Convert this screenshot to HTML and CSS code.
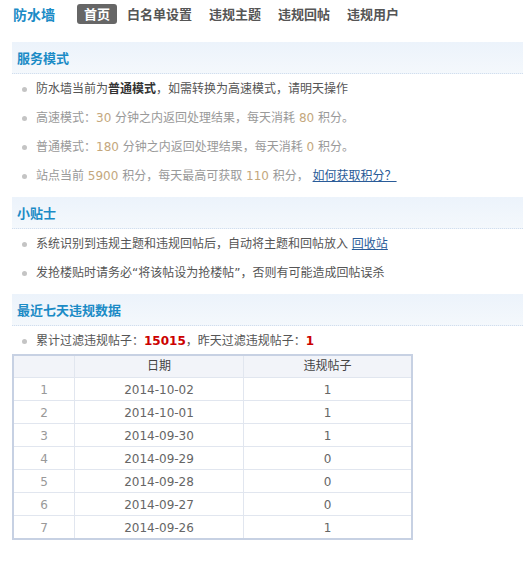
FILE: index.html
```html
<!DOCTYPE html>
<html>
<head>
<meta charset="utf-8">
<link rel="stylesheet" href="styles.css">
</head>
<body>
<div class="page">
  <div class="topbar">
    <span class="brand">防水墙</span>
    <nav class="nav">
      <a class="nav-item active">首页</a>
      <a class="nav-item">白名单设置</a>
      <a class="nav-item">违规主题</a>
      <a class="nav-item">违规回帖</a>
      <a class="nav-item">违规用户</a>
    </nav>
  </div>

  <h2 class="band">服务模式</h2>
  <ul class="list">
    <li class="dark">防水墙当前为<b>普通模式</b>，如需转换为高速模式，请明天操作</li>
    <li class="muted">高速模式：<span class="num">30</span> 分钟之内返回处理结果，每天消耗 <span class="num">80</span> 积分。</li>
    <li class="muted">普通模式：<span class="num">180</span> 分钟之内返回处理结果，每天消耗 <span class="num">0</span> 积分。</li>
    <li class="muted">站点当前 <span class="num">5900</span> 积分，每天最高可获取 <span class="num">110</span> 积分， <a class="link">如何获取积分？</a></li>
  </ul>

  <h2 class="band">小贴士</h2>
  <ul class="list">
    <li class="dark">系统识别到违规主题和违规回帖后，自动将主题和回帖放入 <a class="link">回收站</a></li>
    <li class="dark">发抢楼贴时请务必“将该帖设为抢楼帖”，否则有可能造成回帖误杀</li>
  </ul>

  <h2 class="band">最近七天违规数据</h2>
  <ul class="list stats">
    <li class="dark">累计过滤违规帖子：<span class="red">15015</span>，昨天过滤违规帖子：<span class="red">1</span></li>
  </ul>

  <table class="data">
    <colgroup>
      <col class="c1"><col class="c2"><col class="c3">
    </colgroup>
    <thead>
      <tr><th></th><th>日期</th><th>违规帖子</th></tr>
    </thead>
    <tbody>
      <tr><td class="idx">1</td><td>2014-10-02</td><td>1</td></tr>
      <tr><td class="idx">2</td><td>2014-10-01</td><td>1</td></tr>
      <tr><td class="idx">3</td><td>2014-09-30</td><td>1</td></tr>
      <tr><td class="idx">4</td><td>2014-09-29</td><td>0</td></tr>
      <tr><td class="idx">5</td><td>2014-09-28</td><td>0</td></tr>
      <tr><td class="idx">6</td><td>2014-09-27</td><td>0</td></tr>
      <tr><td class="idx">7</td><td>2014-09-26</td><td>1</td></tr>
    </tbody>
  </table>
</div>
</body>
</html>
```

FILE: styles.css
```css
html, body {
  margin: 0;
  padding: 0;
  background: #fff;
}
body {
  font-family: "DejaVu Sans", "Noto Sans CJK SC", sans-serif;
  font-size: 12px;
  color: #555;
}
.page {
  padding-left: 12px;
}
.topbar {
  display: flex;
  align-items: center;
  height: 28px;
  margin-bottom: 14px;
}
.brand {
  font-family: "Noto Sans CJK SC", sans-serif;
  font-size: 14px;
  font-weight: bold;
  color: #1b8bc6;
  padding-left: 1px;
  margin-right: 22px;
  line-height: 20px;
}
.nav {
  display: flex;
  gap: 3px;
}
.nav-item {
  font-family: "Noto Sans CJK SC", sans-serif;
  font-size: 13px;
  font-weight: bold;
  color: #555;
  line-height: 20px;
  padding: 0 7px;
  border-radius: 3px;
}
.nav-item.active {
  background: #666;
  color: #fff;
}
.band {
  margin: 0;
  height: 31px;
  line-height: 31px;
  padding-left: 5px;
  background: linear-gradient(#ecf3fb, #f4f8fc);
  border-bottom: 1px dotted #d2deed;
  font-family: "Noto Sans CJK SC", sans-serif;
  font-size: 13px;
  font-weight: bold;
  color: #1b8bc6;
}
.list {
  list-style: none;
  margin: 0 0 6px 0;
  padding: 1px 0 0 0;
}
.list li {
  position: relative;
  height: 29px;
  line-height: 29px;
  padding-left: 24px;
  white-space: nowrap;
}
.list li::before {
  content: "";
  position: absolute;
  left: 10px;
  top: 12px;
  width: 5px;
  height: 5px;
  border-radius: 50%;
  background: #c4c4c4;
}
.list li.dark {
  color: #555;
}
.list li.dark b {
  color: #333;
}
.list li.muted {
  color: #999;
}
.num {
  color: #c4a77d;
}
.link {
  color: #2a5b98;
  text-decoration: underline;
}
.list.stats {
  padding-top: 2px;
  margin-bottom: 0;
}
.list.stats li {
  height: 26px;
  line-height: 26px;
}
.list.stats li::before {
  top: 11px;
}
.red {
  color: #cc0000;
  font-weight: bold;
}
.data {
  table-layout: fixed;
  width: 401px;
  border-collapse: separate;
  border-spacing: 0;
  border: 2px solid #c7d1e3;
  font-size: 12px;
}
.data col.c1 { width: 61px; }
.data col.c2 { width: 169px; }
.data col.c3 { width: 167px; }
.data th,
.data td {
  padding: 0;
  text-align: center;
  border-right: 1px solid #e1e6ef;
  border-bottom: 1px solid #e1e6ef;
}
.data th:last-child,
.data td:last-child {
  border-right: none;
}
.data th {
  background: #f2f4f9;
  font-weight: normal;
  color: #444;
  line-height: 21px;
}
.data td {
  color: #666;
  line-height: 22px;
  padding-top: 1px;
  padding-bottom: 0;
}
.data td {
  line-height: 20px;
  padding: 2px 0 0 0;
}
.data td.idx {
  color: #999;
}
.data tbody tr:last-child td {
  border-bottom: none;
  padding-bottom: 0;
}
```
